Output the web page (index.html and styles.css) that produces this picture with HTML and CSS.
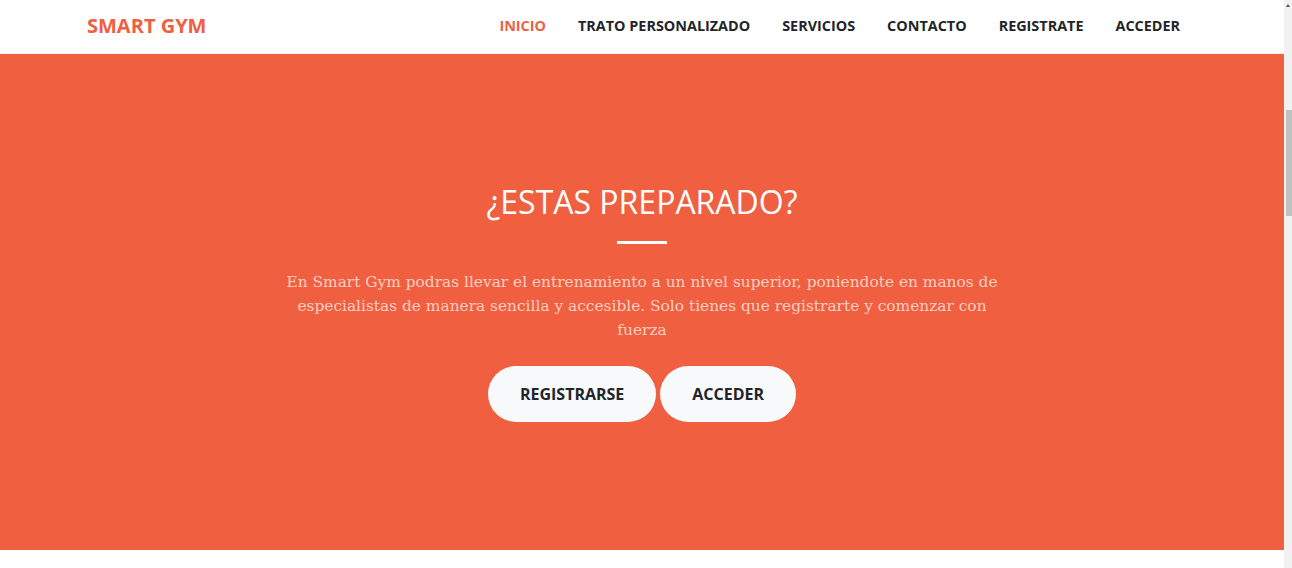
FILE: index.html
```html
<!DOCTYPE html>
<html lang="es">
<head>
<meta charset="utf-8">
<title>Smart Gym</title>
<link rel="stylesheet" href="styles.css">
</head>
<body>
<div class="window">
  <div class="page">
    <nav class="navbar">
      <div class="container nav-inner">
        <a class="brand" href="#">SMART GYM</a>
        <ul class="nav-links">
          <li><a class="active" href="#">Inicio</a></li>
          <li><a href="#">Trato personalizado</a></li>
          <li><a href="#">Servicios</a></li>
          <li><a href="#">Contacto</a></li>
          <li><a href="#">Registrate</a></li>
          <li><a href="#">Acceder</a></li>
        </ul>
      </div>
    </nav>
    <section class="hero">
      <div class="hero-content">
        <h2 class="hero-title">¿ESTAS PREPARADO?</h2>
        <hr class="divider">
        <p class="hero-text">En Smart Gym podras llevar el entrenamiento a un nivel superior, poniendote en manos de especialistas de manera sencilla y accesible. Solo tienes que registrarte y comenzar con fuerza</p>
        <div class="actions">
          <a class="btn" href="#">Registrarse</a>
          <a class="btn" href="#">Acceder</a>
        </div>
      </div>
    </section>
    <section class="next"></section>
  </div>
  <div class="scrollbar">
    <div class="arrow"></div>
    <div class="thumb"></div>
  </div>
</div>
</body>
</html>
```

FILE: styles.css
```css
* { box-sizing: border-box; }
html, body { margin: 0; padding: 0; height: 100%; overflow: hidden; }
body { font-family: "Open Sans", "DejaVu Sans", sans-serif; color: #212529; background: #fff; }

.window { display: flex; height: 568px; width: 1292px; }
.page { flex: 1; display: flex; flex-direction: column; min-width: 0; }

.container { width: 1140px; margin: 0 auto; padding: 0 15px; }

.navbar { height: 54px; background: #fff; border-bottom: 1px solid rgba(33,37,41,0.08); flex: none; }
.nav-inner { display: flex; align-items: center; justify-content: space-between; height: 51px; }
.brand { color: #f05f40; font-weight: 700; font-size: 20px; text-decoration: none; letter-spacing: 0; }
.nav-links { list-style: none; margin: 0; padding: 0 1px 0 0; display: flex; }
.nav-links a { display: block; padding: 0 16px; font-size: 14.4px; font-weight: 700; text-transform: uppercase; color: #212529; text-decoration: none; }
.nav-links a.active { color: #f05f40; }

.hero { height: 496px; background: #f05f40; display: flex; align-items: center; justify-content: center; flex: none; }
.hero-content { width: 730px; text-align: center; padding-top: 1px; }
.hero-title { margin: 0; font-weight: 400; font-size: 32px; line-height: 1.2; color: #fff; }
.divider { width: 50px; margin: 20px auto 26px; border: 0; border-top: 3px solid #fff; height: 0; }
.hero-text { margin: 0 0 24px; font-family: "DejaVu Serif", "Liberation Serif", serif; font-size: 15.4px; line-height: 24px; color: rgba(255,255,255,0.7); }
.actions { display: flex; justify-content: center; gap: 4px; }
.btn { display: inline-block; padding: 16px 32px; font-size: 16px; line-height: 24px; font-weight: 700; text-transform: uppercase; color: #212529; background: #f8f9fa; border-radius: 300px; text-decoration: none; }

.next { flex: 1; background: #fff; }

.scrollbar { width: 8px; flex: none; background: #f1f1f1; position: relative; }
.arrow { position: absolute; left: 2px; top: 4px; width: 0; height: 0; border-left: 2px solid transparent; border-right: 2px solid transparent; border-bottom: 3px solid #505050; }
.thumb { position: absolute; left: 2px; right: 0; top: 110px; height: 106px; background: #c1c1c1; }
```
